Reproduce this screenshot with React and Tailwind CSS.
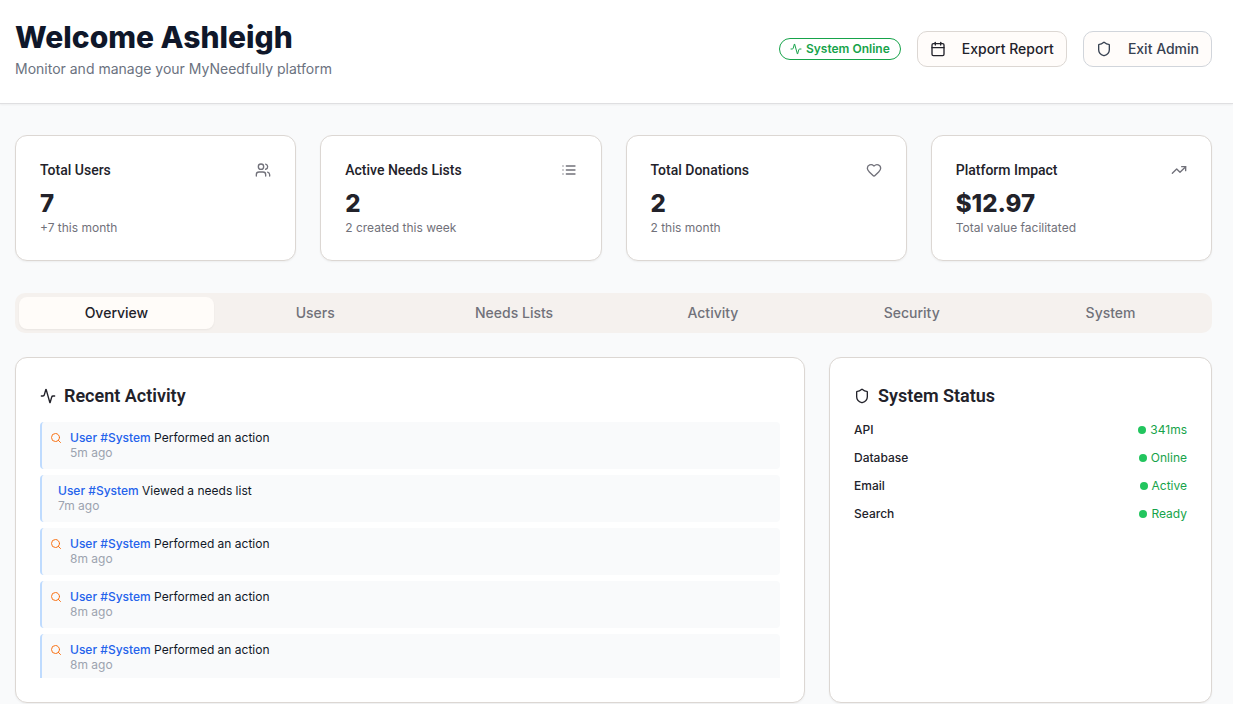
import { Activity, Calendar, Heart, Search, Shield, TrendingUp, Users } from "lucide-react";
import { useState } from "react";

function ListIcon({ className }) {
  return (
    <svg viewBox="0 0 24 24" fill="none" stroke="currentColor" strokeWidth="2" strokeLinecap="round" className={className} aria-hidden="true">
      <path d="M8 6h13M8 12h13M8 18h13M3 6h.01M3 12h.01M3 18h.01" />
    </svg>
  );
}

const stats = [
  { title: "Total Users", value: "7", note: "+7 this month", Icon: Users },
  { title: "Active Needs Lists", value: "2", note: "2 created this week", Icon: ListIcon },
  { title: "Total Donations", value: "2", note: "2 this month", Icon: Heart },
  { title: "Platform Impact", value: "$12.97", note: "Total value facilitated", Icon: TrendingUp },
];

const tabs = ["Overview", "Users", "Needs Lists", "Activity", "Security", "System"];

const events = [
  { action: "Performed an action", time: "5m ago", icon: true },
  { action: "Viewed a needs list", time: "7m ago", icon: false },
  { action: "Performed an action", time: "8m ago", icon: true },
  { action: "Performed an action", time: "8m ago", icon: true },
  { action: "Performed an action", time: "8m ago", icon: true },
];

const services = [
  { name: "API", state: "341ms" },
  { name: "Database", state: "Online" },
  { name: "Email", state: "Active" },
  { name: "Search", state: "Ready" },
];

const card = "rounded-xl border border-[#dcd7d3] bg-white p-6 shadow-xs";

export default function App() {
  const [active, setActive] = useState("Overview");
  return (
    <div className="min-h-screen bg-[#f9fafb] font-['Inter',sans-serif] text-[#22222a]">
      <header className="flex items-start justify-between border-b border-[#dfdfe1] bg-white pt-[17px] pr-[21px] pb-6 pl-[15px] shadow-xs">
        <div>
          <h1 className="text-3xl leading-10 font-extrabold text-[#0f172a]">Welcome Ashleigh</h1>
          <p className="pt-0.5 text-sm leading-5 text-[#6b7280]">Monitor and manage your MyNeedfully platform</p>
        </div>
        <div className="flex items-center gap-4 pt-3.5">
          <span className="flex h-[22px] items-center gap-1 rounded-full border border-[#16a34a] px-2.5 text-xs font-semibold text-[#16a34a]">
            <Activity className="size-3" />
            System Online
          </span>
          <button type="button" className="flex h-9 items-center gap-4 rounded-[10px] border border-[#dcd7d3] bg-[#fffcfa] px-3 text-sm font-medium">
            <Calendar className="size-4" />
            Export Report
          </button>
          <button type="button" className="flex h-9 items-center gap-4 rounded-[10px] border border-[#d1d5db] bg-[#fffcfa] px-3 text-sm font-medium text-[#374151]">
            <Shield className="size-4" />
            Exit Admin
          </button>
        </div>
      </header>

      <main className="pt-[31px] pr-[21px] pl-[15px]">
        <section className="grid grid-cols-4 gap-6">
          {stats.map(({ title, value, note, Icon }) => (
            <article key={title} className={card}>
              <div className="flex items-center justify-between pb-2">
                <h2 className="font-['Roboto',sans-serif] text-sm leading-5 font-medium">{title}</h2>
                <Icon className="size-4 text-[#71717a]" />
              </div>
              <p className="text-2xl leading-8 font-extrabold">{value}</p>
              <p className="text-xs leading-4 text-[#71717a]">{note}</p>
            </article>
          ))}
        </section>

        <div role="tablist" className="mt-8 grid h-10 grid-cols-6 gap-1 rounded-[10px] bg-[#f5f1ee] p-1">
          {tabs.map((tab) => (
            <button
              key={tab}
              type="button"
              role="tab"
              aria-selected={tab === active}
              onClick={() => setActive(tab)}
              className={
                tab === active
                  ? "rounded-lg bg-[#fffcf9] text-sm font-medium text-[#22222a] shadow-xs"
                  : "rounded-lg text-sm font-medium text-[#71717a]"
              }
            >
              {tab}
            </button>
          ))}
        </div>

        <div className="mt-6 grid grid-cols-3 gap-6">
          <section className={`${card} col-span-2`}>
            <h2 className="flex items-center gap-2 pb-3 font-['Roboto',sans-serif] text-lg leading-7 font-semibold">
              <Activity className="size-4" />
              Recent Activity
            </h2>
            <ul className="flex h-64 flex-col gap-1.5 overflow-hidden">
              {events.map((event, i) => (
                <li key={i} className="flex shrink-0 gap-2 rounded border-l-2 border-[#bfdbfe] bg-[#f9fafb] p-2">
                  <span className="pt-0.5 text-[#f97316]">
                    {event.icon && <Search className="size-3" />}
                  </span>
                  <div className="text-xs leading-[15px]">
                    <p className="text-[#111827]">
                      <a href="#user" className="font-medium text-[#2563eb]">User #System</a> {event.action}
                    </p>
                    <p className="pb-px text-[#9ca3af]">{event.time}</p>
                  </div>
                </li>
              ))}
            </ul>
          </section>

          <section className={card}>
            <h2 className="flex items-center gap-2 pb-3 font-['Roboto',sans-serif] text-lg leading-7 font-semibold">
              <Shield className="size-4" />
              System Status
            </h2>
            <dl className="flex flex-col gap-3 text-xs leading-4">
              {services.map(({ name, state }) => (
                <div key={name} className="flex items-center justify-between">
                  <dt className="font-medium">{name}</dt>
                  <dd className="flex items-center gap-1 text-[#16a34a]">
                    <span className="size-2 rounded-full bg-[#22c55e]" />
                    {state}
                  </dd>
                </div>
              ))}
            </dl>
          </section>
        </div>
      </main>
    </div>
  );
}
